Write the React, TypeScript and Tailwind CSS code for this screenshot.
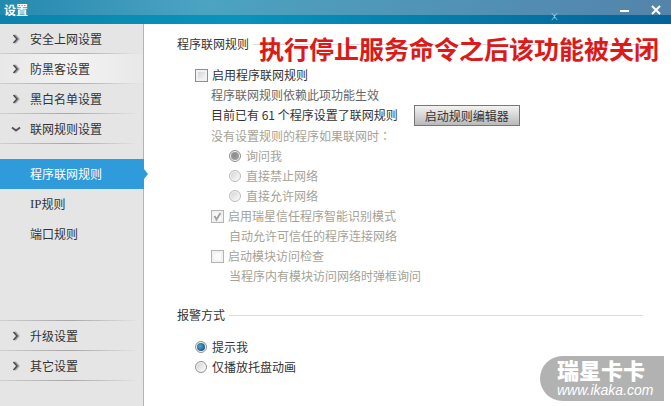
import { useState } from "react";
import type { ReactNode } from "react";

const topMenu = ["安全上网设置", "防黑客设置", "黑白名单设置", "联网规则设置"];
const bottomMenu = ["升级设置", "其它设置"];

function Chevron({ open }: { open?: boolean }) {
  return (
    <svg width="10" height="10" viewBox="0 0 10 10" fill="none" strokeWidth="2" className="shrink-0">
      {open ? (
        <path d="M1 3.5l4 3 4-3" stroke="#555" />
      ) : (
        <>
          <path d="M4 1l3.5 4L4 9" stroke="#a5a5a5" />
          <path d="M2.5 1l3.5 4-3.5 4" stroke="#4a4a4a" strokeWidth="1.5" />
        </>
      )}
    </svg>
  );
}

function Divider() {
  return <div className="h-px bg-linear-to-r from-[#d0d0d0] via-[#a6a6a6] to-[#e5e5e5] mr-1" />;
}

function MenuItem({ label, open, hover }: { label: string; open?: boolean; hover?: boolean }) {
  return (
    <button
      type="button"
      aria-expanded={!!open}
      className={`flex h-[29px] w-full items-center gap-[9px] pl-[11px] text-left ${
        hover ? "bg-linear-to-r from-[#e8e8e8] via-[#f3f3f3] to-[#e8e8e8]" : ""
      }`}
    >
      <Chevron open={open} />
      {label}
    </button>
  );
}

function Check({
  label,
  disabled,
  defaultChecked,
}: {
  label: string;
  disabled?: boolean;
  defaultChecked?: boolean;
}) {
  return (
    <label className={`flex h-5 w-fit items-center gap-1 ${disabled ? "text-[#a5a296]" : ""}`}>
      <span className="relative size-[13px]">
        <input
          type="checkbox"
          disabled={disabled}
          defaultChecked={defaultChecked}
          className="peer block size-[13px] appearance-none border border-[#8a8f94] bg-linear-to-br from-[#c9cbd0] to-white shadow-[inset_0_0_0_2px_#f1f1f1] disabled:border-[#b4b4b4] disabled:from-[#f4f4f4]"
        />
        <svg
          viewBox="0 0 13 13"
          className="pointer-events-none absolute inset-0 hidden size-[13px] peer-checked:block"
          fill="none"
          stroke="#a3a3a3"
          strokeWidth="2"
        >
          <path d="M3.5 6l2 3.5L9.5 3" />
        </svg>
      </span>
      {label}
    </label>
  );
}

function Radio({
  name,
  label,
  checked,
  disabled,
  onChange,
}: {
  name: string;
  label: string;
  checked: boolean;
  disabled?: boolean;
  onChange?: () => void;
}) {
  return (
    <label className={`flex h-5 w-fit items-center gap-[5px] ${disabled ? "text-[#a5a296]" : ""}`}>
      <span className="relative size-3">
        <input
          type="radio"
          name={name}
          checked={checked}
          disabled={disabled}
          onChange={() => onChange?.()}
          className="peer block size-3 appearance-none rounded-full border border-[#8e9499] bg-linear-to-br from-[#cfcfcf] to-white shadow-[inset_0_0_0_1px_#f4f4f4] disabled:border-[#bdbdbd] disabled:checked:border-[#8f8f8f]"
        />
        <span className="pointer-events-none absolute inset-[2px] hidden rounded-full bg-radial-[at_40%_40%] from-[#4fa6d8] to-[#0c3c66] peer-checked:block peer-disabled:from-[#8a8a8a] peer-disabled:to-[#a8a8a8]" />
      </span>
      {label}
    </label>
  );
}

function SectionTitle({ children }: { children: ReactNode }) {
  return (
    <div className="flex h-5 items-center gap-1">
      <h2>{children}</h2>
      <div className="h-px flex-1 bg-[#dcdcdc]" />
    </div>
  );
}

export default function App() {
  const [alarm, setAlarm] = useState("tip");

  return (
    <div className="relative flex min-h-screen flex-col bg-white font-['Noto_Sans_CJK_SC',sans-serif] text-[12px] leading-5 text-[#333]">
      <header className="relative flex h-6 items-center justify-between bg-linear-to-r from-[#2389ae] via-[#4ba3c2] via-30% to-[#5484aa] pr-[10px] pb-1 pl-[4px] text-white">
        <div className="absolute inset-x-0 bottom-0 h-[9px] bg-linear-to-r from-[#0b83ac] via-[#0894ba] via-35% to-[#04639a]" />
        <svg className="absolute top-[12px] left-[82%] size-[9px]" viewBox="0 0 10 10" stroke="#8ccbe2" strokeWidth="1">
          <path d="M2 1l6 8M8 1l-6 8M5 3v4" />
        </svg>
        <h1 className="relative text-[12px] font-bold">设置</h1>
        <div className="relative flex items-center gap-[21px]">
          <button type="button" aria-label="最小化">
            <svg width="10" height="10" viewBox="0 0 10 10" stroke="#fff" strokeWidth="2">
              <path d="M0 6h9" />
            </svg>
          </button>
          <button type="button" aria-label="关闭">
            <svg width="10" height="10" viewBox="0 0 10 10" stroke="#fff" strokeWidth="2">
              <path d="M1 1l8 8M9 1l-8 8" />
            </svg>
          </button>
        </div>
      </header>

      <div className="flex flex-1">
        <nav className="flex w-36 shrink-0 flex-col border-r border-[#b4b4b4] bg-[#e5e5e5] pb-[25px]">
          {topMenu.map((item, i) => (
            <div key={item}>
              <MenuItem label={item} hover={i === 1} open={i === 3} />
              <Divider />
            </div>
          ))}
          <div className="mt-[15px] mb-4 flex flex-col">
            <a href="#program" className="relative -mr-px flex h-[30px] items-center bg-[#2f9bdb] pl-[30px] text-white">
              程序联网规则
              <svg className="absolute top-[10px] left-full" width="4" height="10" viewBox="0 0 4 10">
                <path d="M0 0l4 5-4 5z" fill="#2f9bdb" />
              </svg>
            </a>
            <a href="#ip" className="flex h-[30px] items-center pl-[30px]">
              <span className="font-['Liberation_Serif',serif] text-[13px]">IP</span>规则
            </a>
            <a href="#port" className="flex h-[30px] items-center pl-[30px]">
              端口规则
            </a>
          </div>
          <div className="mt-auto">
            <Divider />
            {bottomMenu.map((item) => (
              <div key={item}>
                <MenuItem label={item} />
                <Divider />
              </div>
            ))}
          </div>
        </nav>

        <main className="flex-1 pt-[10px] pr-7 pl-[33px]">
          <section className="relative">
            <SectionTitle>程序联网规则</SectionTitle>
            <p className="absolute top-0 left-[82px] text-[25px] leading-7 font-bold whitespace-nowrap text-[#dc1a1a]">
              执行停止服务命令之后该功能被关闭
            </p>
            <div className="mt-[11px] pl-[18px]">
              <Check label="启用程序联网规则" />
              <div className="pl-4">
                <p className="text-[#666]">程序联网规则依赖此项功能生效</p>
                <div className="flex h-5 items-center gap-4">
                  <span>目前已有 61 个程序设置了联网规则</span>
                  <button
                    type="button"
                    className="h-[21px] w-[106px] border border-[#777] bg-linear-to-b from-[#f3f3f3] to-[#b9b9b9] leading-[19px]"
                  >
                    启动规则编辑器
                  </button>
                </div>
                <p className="mt-px text-[#a5a296]">
                  没有设置规则的程序如果联网时
                  <span className="font-['Noto_Sans_CJK_TC',sans-serif]" lang="zh-TW">：</span>
                </p>
                <div className="pl-[18px]">
                  <Radio name="ask" label="询问我" checked disabled />
                  <Radio name="ask" label="直接禁止网络" checked={false} disabled />
                  <Radio name="ask" label="直接允许网络" checked={false} disabled />
                </div>
                <Check label="启用瑞星信任程序智能识别模式" disabled defaultChecked />
                <p className="pl-[18px] text-[#a5a296]">自动允许可信任的程序连接网络</p>
                <Check label="启动模块访问检查" disabled />
                <p className="pl-[18px] text-[#a5a296]">当程序内有模块访问网络时弹框询问</p>
              </div>
            </div>
          </section>

          <section className="mt-[19px]">
            <SectionTitle>报警方式</SectionTitle>
            <div className="mt-3 pl-[18px]">
              <Radio name="alarm" label="提示我" checked={alarm === "tip"} onChange={() => setAlarm("tip")} />
              <Radio
                name="alarm"
                label="仅播放托盘动画"
                checked={alarm === "tray"}
                onChange={() => setAlarm("tray")}
              />
            </div>
          </section>
        </main>
      </div>

      <div className="absolute right-[7px] bottom-[5px] flex h-[45px] w-[124px] flex-col rounded-l-full bg-[#b2b2b2] pl-[17px] text-white">
        <span className="text-[22px] leading-[26px] font-black">瑞星卡卡</span>
        <span className="font-['Liberation_Sans',sans-serif] text-[14px] leading-4 italic">www.ikaka.com</span>
      </div>
    </div>
  );
}
